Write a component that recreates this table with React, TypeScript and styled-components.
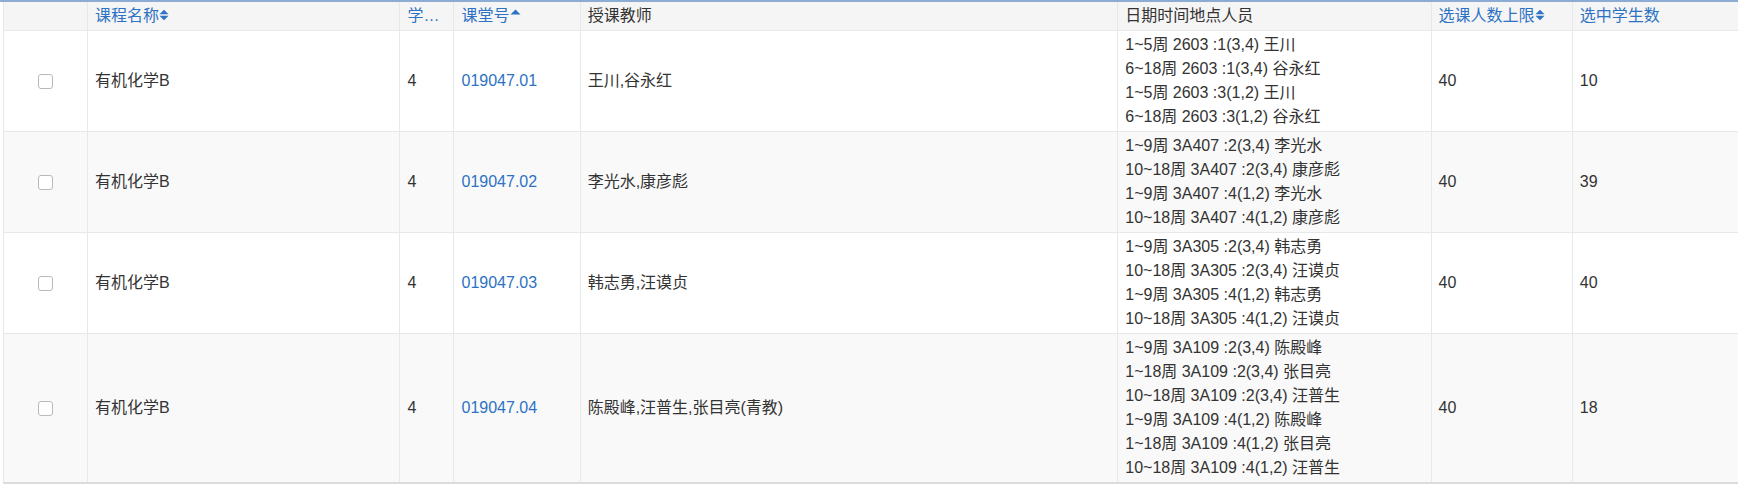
import React from 'react';
import styled, { createGlobalStyle } from 'styled-components';

interface Section {
  no: string;
  teachers: string;
  schedule: string[];
  limit: number;
  picked: number;
}

const sections: Section[] = [
  {
    no: '019047.01',
    teachers: '王川,谷永红',
    schedule: [
      '1~5周 2603 :1(3,4) 王川',
      '6~18周 2603 :1(3,4) 谷永红',
      '1~5周 2603 :3(1,2) 王川',
      '6~18周 2603 :3(1,2) 谷永红',
    ],
    limit: 40,
    picked: 10,
  },
  {
    no: '019047.02',
    teachers: '李光水,康彦彪',
    schedule: [
      '1~9周 3A407 :2(3,4) 李光水',
      '10~18周 3A407 :2(3,4) 康彦彪',
      '1~9周 3A407 :4(1,2) 李光水',
      '10~18周 3A407 :4(1,2) 康彦彪',
    ],
    limit: 40,
    picked: 39,
  },
  {
    no: '019047.03',
    teachers: '韩志勇,汪谟贞',
    schedule: [
      '1~9周 3A305 :2(3,4) 韩志勇',
      '10~18周 3A305 :2(3,4) 汪谟贞',
      '1~9周 3A305 :4(1,2) 韩志勇',
      '10~18周 3A305 :4(1,2) 汪谟贞',
    ],
    limit: 40,
    picked: 40,
  },
  {
    no: '019047.04',
    teachers: '陈殿峰,汪普生,张目亮(青教)',
    schedule: [
      '1~9周 3A109 :2(3,4) 陈殿峰',
      '1~18周 3A109 :2(3,4) 张目亮',
      '10~18周 3A109 :2(3,4) 汪普生',
      '1~9周 3A109 :4(1,2) 陈殿峰',
      '1~18周 3A109 :4(1,2) 张目亮',
      '10~18周 3A109 :4(1,2) 汪普生',
    ],
    limit: 40,
    picked: 18,
  },
];

const columnWidths = [84, 312, 54, 126, 537, 313, 141, 170];

type SortState = 'none' | 'both' | 'asc';

// glyphicon-like sort marks next to sortable headers
function SortMark({ state }: { state: SortState }) {
  if (state === 'none') return null;
  if (state === 'asc') {
    return (
      <SortSvg width="11" height="12" viewBox="0 0 11 12">
        <path d="M0.5 5.5 L5.5 0.5 L10.5 5.5 Z" fill="currentColor" />
      </SortSvg>
    );
  }
  return (
    <SortSvg width="10" height="12" viewBox="0 0 10 12">
      <path d="M0.5 5.3 L5 0.8 L9.5 5.3 Z" fill="currentColor" />
      <path d="M0.5 6.7 L5 11.2 L9.5 6.7 Z" fill="currentColor" />
    </SortSvg>
  );
}

export default function App() {
  return (
    <>
      <GlobalStyle />
      <Frame>
        <Grid>
          <colgroup>
            {columnWidths.map((w, i) => (
              <col key={i} style={{ width: w }} />
            ))}
          </colgroup>
          <thead>
            <tr>
              <HeadCell />
              <HeadCell $link>
                课程名称
                <SortMark state="both" />
              </HeadCell>
              <HeadCell $link>学分数</HeadCell>
              <HeadCell $link>
                课堂号
                <SortMark state="asc" />
              </HeadCell>
              <HeadCell>授课教师</HeadCell>
              <HeadCell>日期时间地点人员</HeadCell>
              <HeadCell $link>
                选课人数上限
                <SortMark state="both" />
              </HeadCell>
              <HeadCell $link>选中学生数</HeadCell>
            </tr>
          </thead>
          <tbody>
            {sections.map((s, i) => (
              <Row key={s.no} $striped={i % 2 === 1}>
                <Cell $center>
                  <Check />
                </Cell>
                <Cell>有机化学B</Cell>
                <Cell>4</Cell>
                <Cell>
                  <CodeLink>{s.no}</CodeLink>
                </Cell>
                <Cell>{s.teachers}</Cell>
                <Cell>
                  {s.schedule.map(line => (
                    <ScheduleLine key={line}>{line}</ScheduleLine>
                  ))}
                </Cell>
                <Cell>{s.limit}</Cell>
                <Cell>{s.picked}</Cell>
              </Row>
            ))}
          </tbody>
        </Grid>
      </Frame>
    </>
  );
}

const GlobalStyle = createGlobalStyle`
  html, body {
    margin: 0;
    padding: 0;
    background: #ffffff;
    overflow: hidden;
  }
  body {
    font-family: "Liberation Sans", "Noto Sans CJK SC", sans-serif;
    font-size: 16px;
    color: #333333;
  }
`;

const Frame = styled.div`
  border-top: 2px solid #8cacd4;
  padding-left: 3px;
  width: 1760px;
`;

const Grid = styled.table`
  border-collapse: collapse;
  table-layout: fixed;
  width: 1740px;
  border-left: 1px solid #e6e8ea;
  border-bottom: 2px solid #dcdcdc;
`;

const HeadCell = styled.th<{ $link?: boolean }>`
  height: 24px;
  padding: 2px 7px;
  line-height: 24px;
  text-align: left;
  font-weight: normal;
  background: #f5f5f5;
  color: ${p => (p.$link ? '#2d72c4' : '#333333')};
  border-right: 1px solid #e6e8ea;
  border-bottom: 1px solid #e6e8ea;
  white-space: nowrap;
  overflow: hidden;
  text-overflow: ellipsis;
`;

const SortSvg = styled.svg`
  display: inline-block;
  vertical-align: 0px;
`;

const Row = styled.tr<{ $striped?: boolean }>`
  background: ${p => (p.$striped ? '#f9f9f9' : '#ffffff')};
`;

const Cell = styled.td<{ $center?: boolean }>`
  padding: 2px 7px;
  line-height: 24px;
  vertical-align: middle;
  text-align: ${p => (p.$center ? 'center' : 'left')};
  border-right: 1px solid #e6e8ea;
  border-bottom: 1px solid #e6e8ea;
  white-space: nowrap;
`;

const Check = styled.span`
  display: inline-block;
  box-sizing: border-box;
  width: 15px;
  height: 15px;
  border: 1px solid #b9b9b9;
  border-radius: 3px;
  background: #ffffff;
  vertical-align: middle;
`;

const CodeLink = styled.a`
  color: #2d72c4;
  text-decoration: none;
  cursor: pointer;
`;

const ScheduleLine = styled.div`
  line-height: 24px;
`;
